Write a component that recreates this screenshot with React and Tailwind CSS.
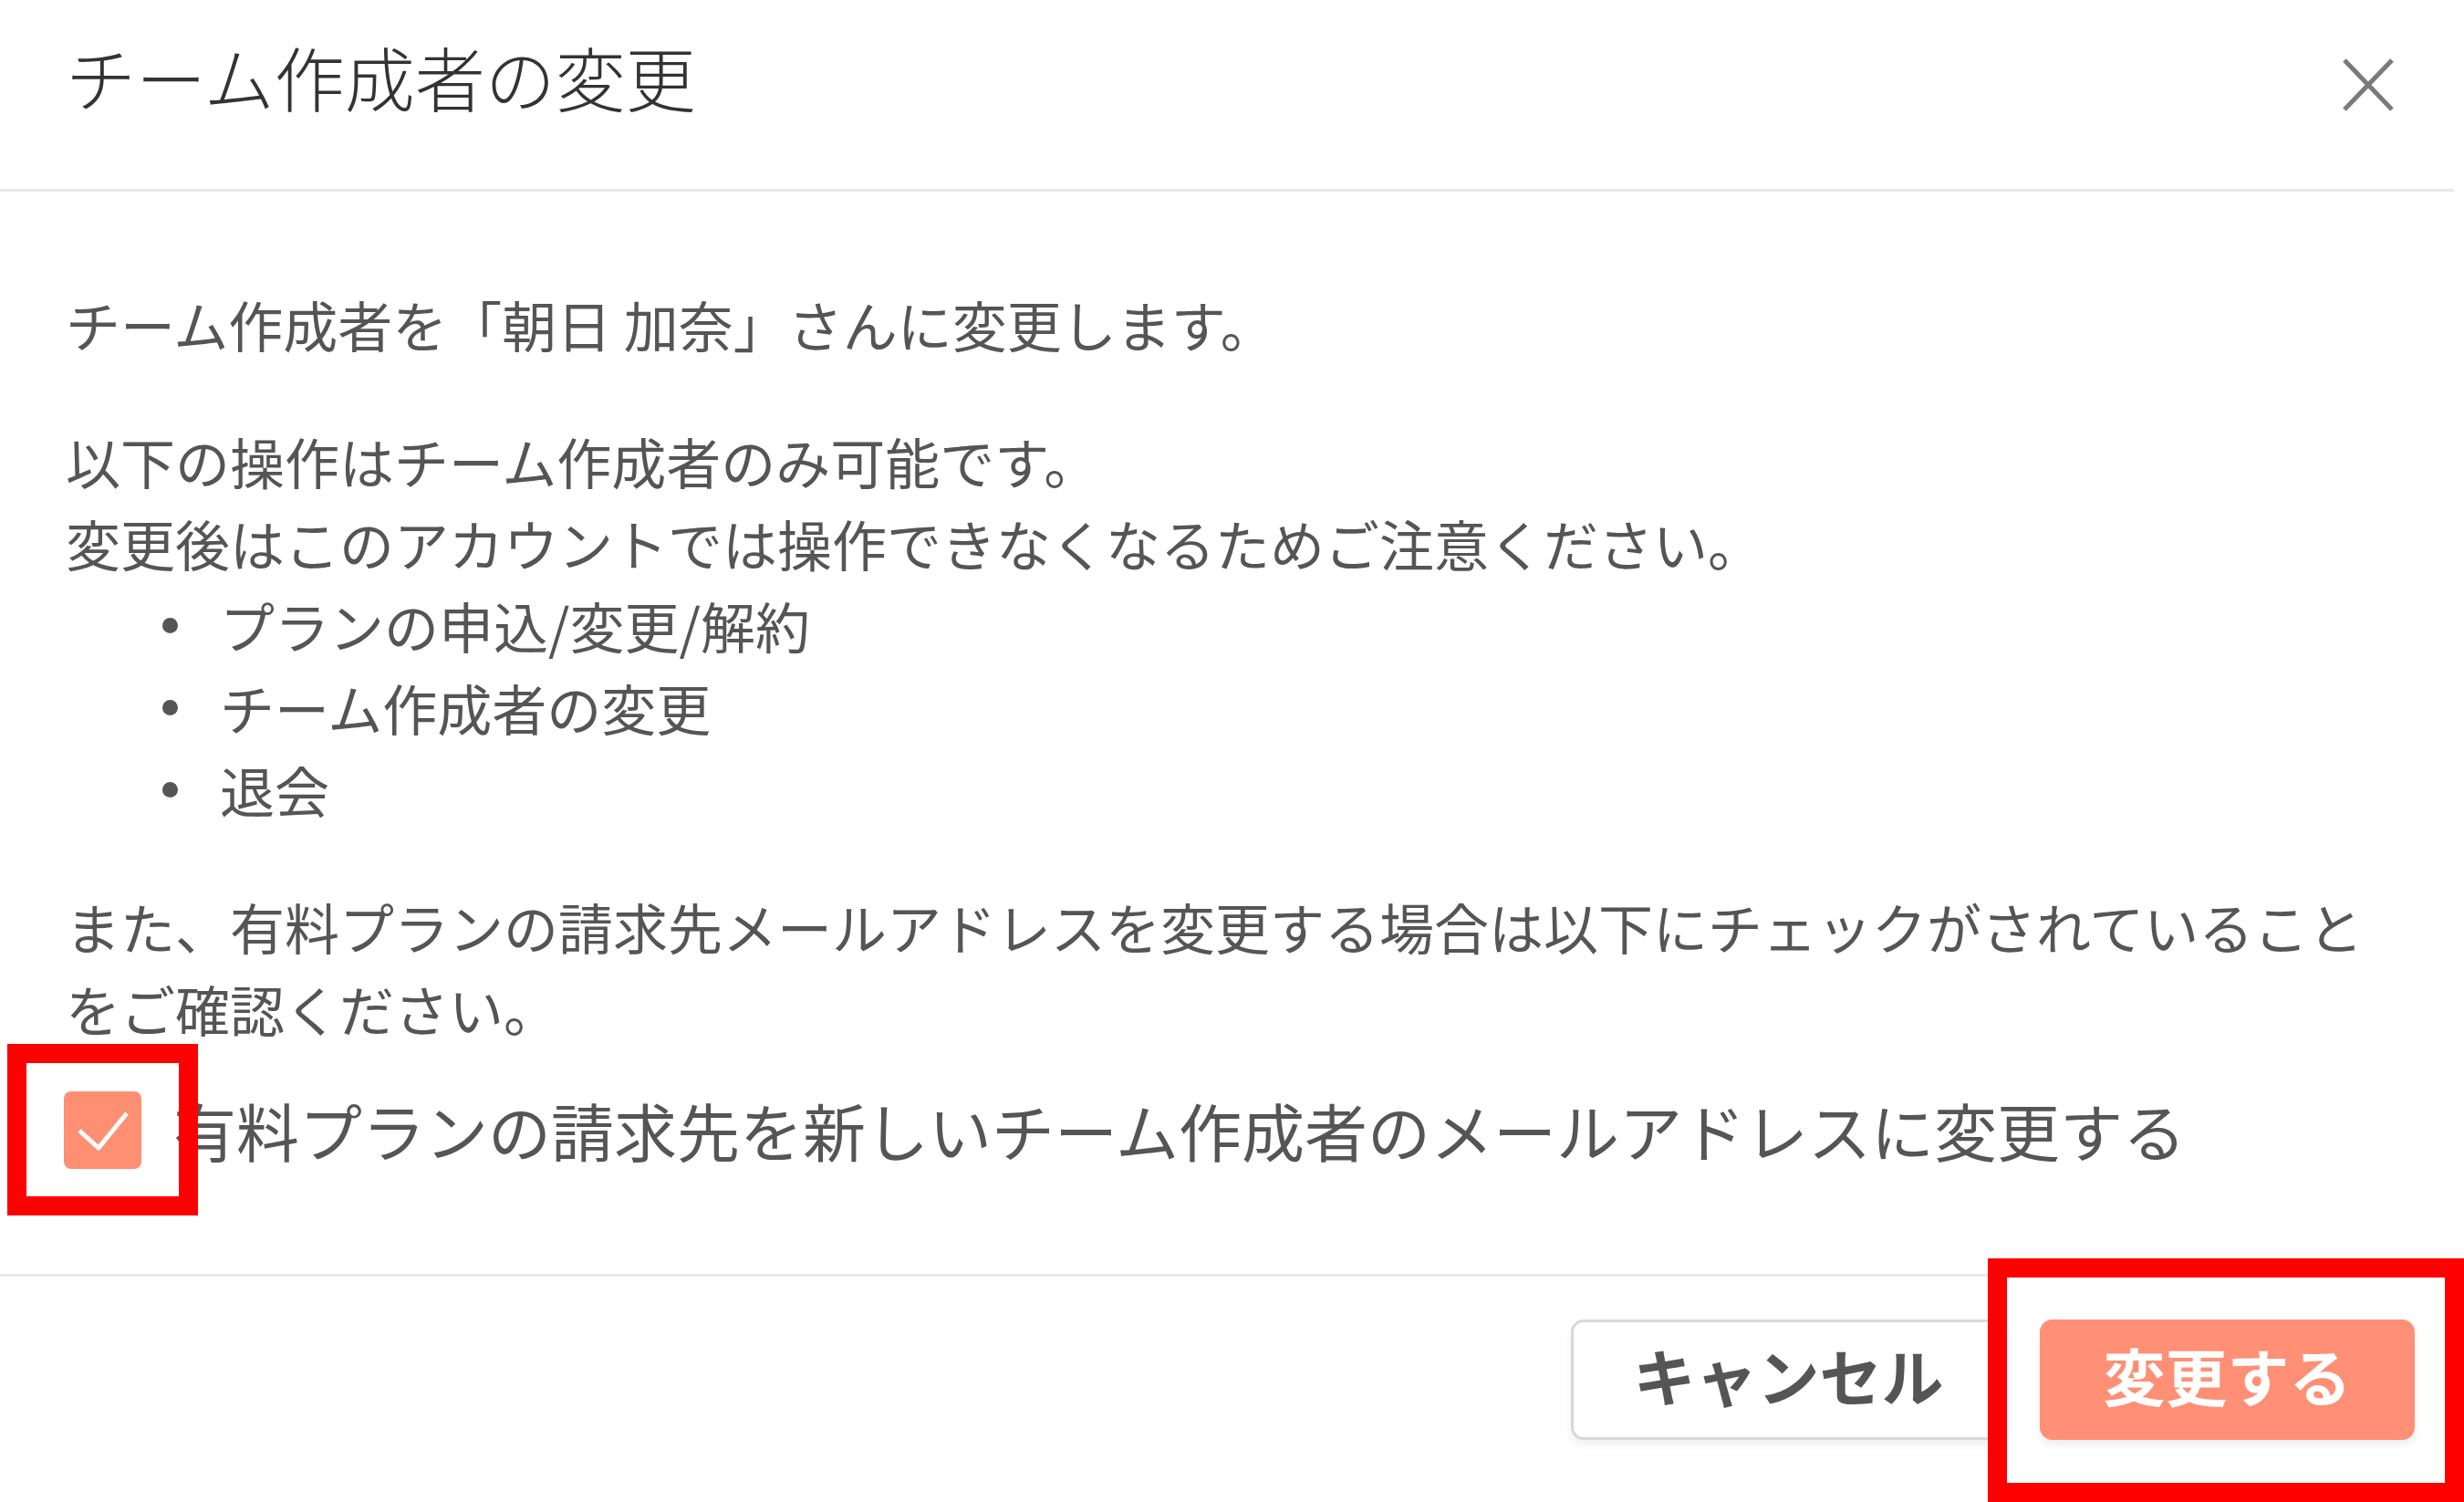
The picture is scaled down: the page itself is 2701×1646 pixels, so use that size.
import { useState } from 'react';

const FONT = "font-['Noto_Sans_CJK_JP','Noto_Sans',sans-serif]";

function CloseIcon() {
  return (
    <svg width="58" height="60" viewBox="0 0 58 60" fill="none">
      <path d="M3 3L55 57M55 3L3 57" stroke="#7a7a7a" strokeWidth="5" strokeLinecap="butt" />
    </svg>
  );
}

function Bullet({ children }) {
  return (
    <div className="flex items-center h-[90px]">
      <span className="ml-[106px] w-[17px] h-[17px] rounded-full bg-[#555]" />
      <span className="ml-[46px]">{children}</span>
    </div>
  );
}

export default function App() {
  const [checked, setChecked] = useState(true);

  return (
    <div className={`relative w-[2701px] h-[1646px] bg-white overflow-hidden ${FONT}`}>
      {/* Header */}
      <div className="flex items-start justify-between h-[210px] pl-[72px] pr-[76px] pt-[45px] border-b-[3px] border-[#e8e8e8] mr-[11px]">
        <h1 className="text-[77px] leading-none font-light text-[#333]">チーム作成者の変更</h1>
        <button className="mt-[18px] mr-[-11px]">
          <CloseIcon />
        </button>
      </div>

      {/* Body */}
      <div className="pl-[72px] pt-[100px] pb-[115px] w-[2612px] text-[60px] leading-[90px] text-[#555] border-b-[3px] border-[#e8e8e8] mr-[11px]">
        <p>チーム作成者を「朝日 加奈」さんに変更します。</p>
        <div className="mt-[60px]">
          <p>以下の操作はチーム作成者のみ可能です。</p>
          <p>変更後はこのアカウントでは操作できなくなるためご注意ください。</p>
          <Bullet>プランの申込/変更/解約</Bullet>
          <Bullet>チーム作成者の変更</Bullet>
          <Bullet>退会</Bullet>
        </div>
        <p className="mt-[60px] w-[2540px]">
          また、有料プランの請求先メールアドレスを変更する場合は以下にチェックがされていることをご確認ください。
        </p>
        <label className="flex items-center h-[85px] mt-[46px] cursor-pointer">
          <span
            onClick={() => setChecked(!checked)}
            className="w-[85px] h-[85px] rounded-[8px] bg-[#ff8f73] flex items-center justify-center shrink-0 -ml-[2px]"
          >
            {checked && (
              <svg width="56" height="44" viewBox="0 0 56 44" fill="none">
                <path d="M2 22L23 41L54 3" stroke="#fff" strokeWidth="5" />
              </svg>
            )}
          </span>
          <span className="ml-[35px] text-[69px] leading-none text-[#555] whitespace-nowrap">
            有料プランの請求先を新しいチーム作成者のメールアドレスに変更する
          </span>
        </label>
      </div>

      {/* Footer */}
      <div className="flex justify-end gap-[37px] pt-[47px] pr-[54px]">
        <button className="w-[477px] h-[132px] pb-[10px] rounded-[14px] border-[3px] border-[#d8d8d8] bg-white text-[68px] font-bold text-[#555] shadow-[0_6px_8px_rgba(0,0,0,0.06)]">
          キャンセル
        </button>
        <button className="w-[411px] h-[132px] pb-[10px] rounded-[14px] bg-[#ff8f75] text-[68px] font-bold text-white shadow-[0_6px_8px_rgba(0,0,0,0.06)]">
          変更する
        </button>
      </div>

      {/* Annotation frames */}
      <div className="absolute left-[8px] top-[1144px] w-[209px] h-[188px] border-[21px] border-[#ff0000]" />
      <div className="absolute left-[2179px] top-[1379px] w-[522px] h-[267px] border-[21px] border-[#ff0000]" />
    </div>
  );
}
